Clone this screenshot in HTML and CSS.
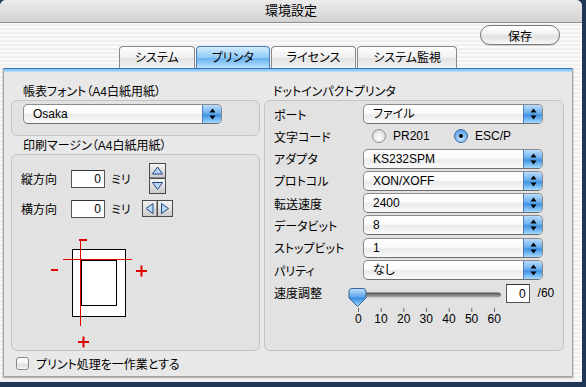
FILE: index.html
```html
<!DOCTYPE html>
<html lang="ja">
<head>
    <meta charset="UTF-8">
    <title>環境設定</title>
    <link rel="stylesheet" href="styles.css">
</head>
<body>
    <div class="window">
        <div class="titlebar">環境設定</div>

        <div class="toolbar">
            <button class="save-button">保存</button>
        </div>

        <div class="tabs">
            <div class="tab">システム</div>
            <div class="tab selected">プリンタ</div>
            <div class="tab">ライセンス</div>
            <div class="tab">システム監視</div>
        </div>

        <div class="pane">
            <!-- Left column -->
            <div class="column">
                <div class="group-label">帳表フォント（A4白紙用紙）</div>
                <div class="group font-group">
                    <div class="popup font-popup">
                        <span class="popup-value">Osaka</span>
                        <span class="popup-arrows"><svg width="7" height="12" viewBox="0 0 7 12"><polygon points="3.5,0.5 6.5,4.5 0.5,4.5"/><polygon points="0.5,7.5 6.5,7.5 3.5,11.5"/></svg></span>
                    </div>
                </div>

                <div class="group-label">印刷マージン（A4白紙用紙）</div>
                <div class="group margin-group">
                    <div class="margin-grid">
                        <span>縦方向</span>
                        <input class="field" type="text" value="0" readonly>
                        <span class="unit">ミリ</span>
                        <svg class="stepper" width="17" height="31" viewBox="0 0 17 31">
                            <rect x="0.5" y="0.5" width="16" height="14.5" fill="url(#btn)" stroke="#4a4a4a"/>
                            <rect x="0.5" y="15.5" width="16" height="15" fill="url(#btn)" stroke="#4a4a4a"/>
                            <polygon points="8.5,4 13.5,11 3.5,11" fill="#b9d7fb" stroke="#23487e"/>
                            <polygon points="3.5,19.5 13.5,19.5 8.5,26.5" fill="#b9d7fb" stroke="#23487e"/>
                        </svg>

                        <span>横方向</span>
                        <input class="field" type="text" value="0" readonly>
                        <span class="unit">ミリ</span>
                        <svg class="stepper" width="31" height="17" viewBox="0 0 31 17">
                            <rect x="0.5" y="0.5" width="14.5" height="16" fill="url(#btn)" stroke="#4a4a4a"/>
                            <rect x="15.5" y="0.5" width="15" height="16" fill="url(#btn)" stroke="#4a4a4a"/>
                            <polygon points="4,8.5 11,3.5 11,13.5" fill="#b9d7fb" stroke="#23487e"/>
                            <polygon points="19.5,3.5 19.5,13.5 26.5,8.5" fill="#b9d7fb" stroke="#23487e"/>
                        </svg>
                    </div>

                    <svg class="diagram" width="110" height="116" viewBox="0 0 110 116">
                        <rect x="29.5" y="14.5" width="53" height="67" fill="#fff" stroke="#000"/>
                        <rect x="38.5" y="25.5" width="35" height="45" fill="#fff" stroke="#000"/>
                        <line x1="20" y1="24.5" x2="89" y2="24.5" stroke="#e00000"/>
                        <line x1="37.5" y1="4" x2="37.5" y2="91" stroke="#e00000"/>
                        <line x1="36" y1="5" x2="44" y2="5" stroke="#e00000" stroke-width="2"/>
                        <line x1="8" y1="35" x2="15" y2="35" stroke="#e00000" stroke-width="2"/>
                        <path d="M93 36h11M98.5 30.5v11" stroke="#e00000" stroke-width="2"/>
                        <path d="M35 107h11M40.5 101.5v11" stroke="#e00000" stroke-width="2"/>
                    </svg>
                </div>

                <label class="check-row">
                    <span class="checkbox"></span>
                    プリント処理を一作業とする
                </label>
            </div>

            <!-- Right column -->
            <div class="column">
                <div class="group-label right-label">ドットインパクトプリンタ</div>
                <div class="group printer-group">
                    <div class="printer-grid">
                        <span>ポート</span>
                        <div class="popup"><span class="popup-value">ファイル</span><span class="popup-arrows"><svg width="7" height="12" viewBox="0 0 7 12"><polygon points="3.5,0.5 6.5,4.5 0.5,4.5"/><polygon points="0.5,7.5 6.5,7.5 3.5,11.5"/></svg></span></div>

                        <span>文字コード</span>
                        <div class="radios">
                            <span class="radio"></span><span class="radio-label">PR201</span>
                            <span class="radio checked"></span><span class="radio-label">ESC/P</span>
                        </div>

                        <span>アダプタ</span>
                        <div class="popup"><span class="popup-value">KS232SPM</span><span class="popup-arrows"><svg width="7" height="12" viewBox="0 0 7 12"><polygon points="3.5,0.5 6.5,4.5 0.5,4.5"/><polygon points="0.5,7.5 6.5,7.5 3.5,11.5"/></svg></span></div>

                        <span>プロトコル</span>
                        <div class="popup"><span class="popup-value">XON/XOFF</span><span class="popup-arrows"><svg width="7" height="12" viewBox="0 0 7 12"><polygon points="3.5,0.5 6.5,4.5 0.5,4.5"/><polygon points="0.5,7.5 6.5,7.5 3.5,11.5"/></svg></span></div>

                        <span>転送速度</span>
                        <div class="popup"><span class="popup-value">2400</span><span class="popup-arrows"><svg width="7" height="12" viewBox="0 0 7 12"><polygon points="3.5,0.5 6.5,4.5 0.5,4.5"/><polygon points="0.5,7.5 6.5,7.5 3.5,11.5"/></svg></span></div>

                        <span>データビット</span>
                        <div class="popup"><span class="popup-value">8</span><span class="popup-arrows"><svg width="7" height="12" viewBox="0 0 7 12"><polygon points="3.5,0.5 6.5,4.5 0.5,4.5"/><polygon points="0.5,7.5 6.5,7.5 3.5,11.5"/></svg></span></div>

                        <span>ストップビット</span>
                        <div class="popup"><span class="popup-value">1</span><span class="popup-arrows"><svg width="7" height="12" viewBox="0 0 7 12"><polygon points="3.5,0.5 6.5,4.5 0.5,4.5"/><polygon points="0.5,7.5 6.5,7.5 3.5,11.5"/></svg></span></div>

                        <span>パリティ</span>
                        <div class="popup"><span class="popup-value">なし</span><span class="popup-arrows"><svg width="7" height="12" viewBox="0 0 7 12"><polygon points="3.5,0.5 6.5,4.5 0.5,4.5"/><polygon points="0.5,7.5 6.5,7.5 3.5,11.5"/></svg></span></div>
                    </div>

                    <div class="speed-row">
                        <span class="speed-label">速度調整</span>
                        <div class="slider">
                            <svg width="157" height="28" viewBox="0 0 157 28">
                                <defs>
                                    <linearGradient id="track" x1="0" y1="0" x2="0" y2="1">
                                        <stop offset="0" stop-color="#4d4d4d"/>
                                        <stop offset="1" stop-color="#b4b4b4"/>
                                    </linearGradient>
                                    <linearGradient id="thumb" x1="0" y1="0" x2="0" y2="1">
                                        <stop offset="0" stop-color="#c4e3fc"/>
                                        <stop offset="0.45" stop-color="#5fa6ea"/>
                                        <stop offset="0.55" stop-color="#3d8fe0"/>
                                        <stop offset="1" stop-color="#a9dbff"/>
                                    </linearGradient>
                                </defs>
                                <rect x="4" y="8.5" width="151" height="5" rx="2.5" fill="url(#track)"/>
                                <g stroke="#707070">
                                    <line x1="12.5" y1="24" x2="12.5" y2="28"/>
                                    <line x1="35.2" y1="24" x2="35.2" y2="28"/>
                                    <line x1="57.8" y1="24" x2="57.8" y2="28"/>
                                    <line x1="80.5" y1="24" x2="80.5" y2="28"/>
                                    <line x1="103.2" y1="24" x2="103.2" y2="28"/>
                                    <line x1="125.8" y1="24" x2="125.8" y2="28"/>
                                    <line x1="148.5" y1="24" x2="148.5" y2="28"/>
                                </g>
                                <path d="M6 4.5H17Q20 4.5 20 7.5V14L11.5 22.5L3 14V7.5Q3 4.5 6 4.5Z" fill="url(#thumb)" stroke="#3b659a"/>
                            </svg>
                            <div class="scale">
                                <span>0</span><span>10</span><span>20</span><span>30</span><span>40</span><span>50</span><span>60</span>
                            </div>
                        </div>
                        <input class="field speed-field" type="text" value="0" readonly>
                        <span class="speed-max">/60</span>
                    </div>
                </div>
            </div>
        </div>
    </div>

    <svg width="0" height="0" class="defs">
        <defs>
            <linearGradient id="btn" x1="0" y1="0" x2="0" y2="1">
                <stop offset="0" stop-color="#f6f6f6"/>
                <stop offset="1" stop-color="#c9c9c9"/>
            </linearGradient>
        </defs>
    </svg>
</body>
</html>
```

FILE: styles.css
```css
* {
    box-sizing: border-box;
}
body {
    margin: 0;
    width: 586px;
    height: 387px;
    overflow: hidden;
    background: #203657;
    font-family: "Liberation Sans", "Noto Sans CJK JP", sans-serif;
    font-size: 12px;
    font-feature-settings: "palt";
    color: #000;
}
.defs {
    position: absolute;
}
.window {
    width: 582px;
    height: 382px;
    border-radius: 6px 6px 0 0;
    background: repeating-linear-gradient(#f0f0f0 0 2px, #fafafa 2px 4px);
    overflow: hidden;
}
.titlebar {
    height: 23px;
    line-height: 22px;
    text-align: center;
    font-size: 13px;
    background: linear-gradient(#ececec, #d2d2d2);
    border-bottom: 1px solid #8e8e8e;
}
.toolbar {
    height: 23px;
    display: flex;
    justify-content: flex-end;
    padding: 2px 22px 0 0;
}
.save-button {
    width: 80px;
    height: 20px;
    padding: 0;
    font: inherit;
    border: 1px solid #777;
    border-radius: 10px;
    background: linear-gradient(#fff, #f3f3f3 45%, #e0e0e0 55%, #f8f8f8);
    box-shadow: 0 1px 1px rgba(0, 0, 0, 0.15);
}

/* Tabs */
.tabs {
    height: 22px;
    width: 570px;
    margin-left: 3px;
    display: flex;
    justify-content: center;
    gap: 1px;
}
.tab {
    height: 22px;
    padding: 0 15px;
    line-height: 22px;
    border: 1px solid #8a8a8a;
    border-bottom: none;
    border-radius: 4px 4px 0 0;
    background: linear-gradient(#fefefe, #efefef 50%, #e0e0e0 51%, #f4f4f4);
}
.tab.selected {
    border-color: #4a7db5;
    background: linear-gradient(#d3ecff, #92cbf7 50%, #66aeee 51%, #b8e2ff);
}

/* Tab pane */
.pane {
    width: 570px;
    height: 309px;
    margin-left: 3px;
    padding: 17px 0 0 7px;
    display: grid;
    grid-template-columns: 249px 300px;
    column-gap: 4px;
    align-items: start;
    border: 1px solid #a4a4a4;
    border-top: none;
    background:
        linear-gradient(#3a78b9 0 1px, #7bbcf1 1px, #b9e1ff 4px, transparent 4px) no-repeat,
        #e8e8e8;
    box-shadow: 0 1px 2px rgba(0, 0, 0, 0.35);
}
.group-label {
    height: 15px;
    line-height: 15px;
    padding-left: 12px;
}
.right-label {
    padding-left: 9px;
}
.group {
    border: 1px solid #c4c4c4;
    border-radius: 6px;
    background: #e2e2e2;
}
.font-group {
    height: 36px;
    padding: 3px 0 0 11px;
    margin-bottom: 3px;
}
.margin-group {
    height: 197px;
    padding-top: 8px;
}
.printer-group {
    height: 251px;
    padding: 3px 0 0 9px;
}

/* Popup buttons */
.popup {
    height: 20px;
    width: 180px;
    display: flex;
    border: 1px solid #8a8a8a;
    border-bottom-color: #6e6e6e;
    border-radius: 5px;
    background: linear-gradient(#fff, #fbfbfb 45%, #ebebeb 55%, #fafafa);
    overflow: hidden;
}
.font-popup {
    width: 199px;
}
.popup-value {
    flex: 1;
    line-height: 18px;
    padding-left: 9px;
}
.popup-arrows {
    width: 19px;
    display: flex;
    align-items: center;
    justify-content: center;
    border-left: 1px solid #4f7fb7;
    background: linear-gradient(#b9dcfb, #6cb0ef 45%, #3d91e2 55%, #a6daff);
}

/* Margin settings */
.margin-grid {
    display: grid;
    grid-template-columns: 50px 34px 37px 30px;
    grid-template-rows: 31px 17px;
    row-gap: 6px;
    align-items: center;
    padding-left: 9px;
}
.field {
    width: 34px;
    height: 18px;
    padding: 0 3px 0 0;
    font: inherit;
    text-align: right;
    border: 1px solid #555;
    border-top-color: #333;
    background: #fff;
    outline: none;
}
.unit {
    padding-left: 6px;
}
.stepper {
    justify-self: center;
    display: block;
}
.diagram {
    display: block;
    margin: 18px 0 0 31px;
}
.check-row {
    display: flex;
    align-items: center;
    gap: 7px;
    height: 16px;
    margin-top: 4px;
    padding-left: 5px;
}
.checkbox {
    width: 13px;
    height: 13px;
    border: 1px solid #8a8a8a;
    border-radius: 3px;
    background: linear-gradient(#fff, #f0f0f0 50%, #dadada 51%, #f4f4f4);
}

/* Printer settings */
.printer-grid {
    display: grid;
    grid-template-columns: 89px 180px;
    grid-auto-rows: 20px;
    row-gap: 2.3px;
    align-items: center;
}
.radios {
    display: flex;
    align-items: center;
    padding-left: 9px;
}
.radio {
    width: 14px;
    height: 14px;
    border-radius: 50%;
    border: 1px solid #8d8d8d;
    background: radial-gradient(circle at 50% 70%, #fff, #e6e6e6 60%, #cfcfcf);
    position: relative;
}
.radio.checked {
    border-color: #3e6ba3;
    background: radial-gradient(circle at 50% 70%, #c9e8ff, #6fb3ef 60%, #3f86d4);
}
.radio.checked::after {
    content: "";
    position: absolute;
    left: 4px;
    top: 4px;
    width: 4px;
    height: 4px;
    border-radius: 50%;
    background: #000;
}
.radio-label {
    margin-left: 7px;
    width: 61px;
}
.speed-row {
    display: flex;
    align-items: flex-start;
    margin-top: 4px;
}
.speed-label {
    width: 72px;
    line-height: 20px;
}
.slider svg {
    display: block;
}
.scale {
    display: flex;
    padding-left: 1px;
    line-height: 14px;
}
.scale span {
    width: 22.67px;
    text-align: center;
}
.speed-field {
    width: 24px;
    height: 19px;
}
.speed-max {
    margin-left: 8px;
    line-height: 19px;
}
```
